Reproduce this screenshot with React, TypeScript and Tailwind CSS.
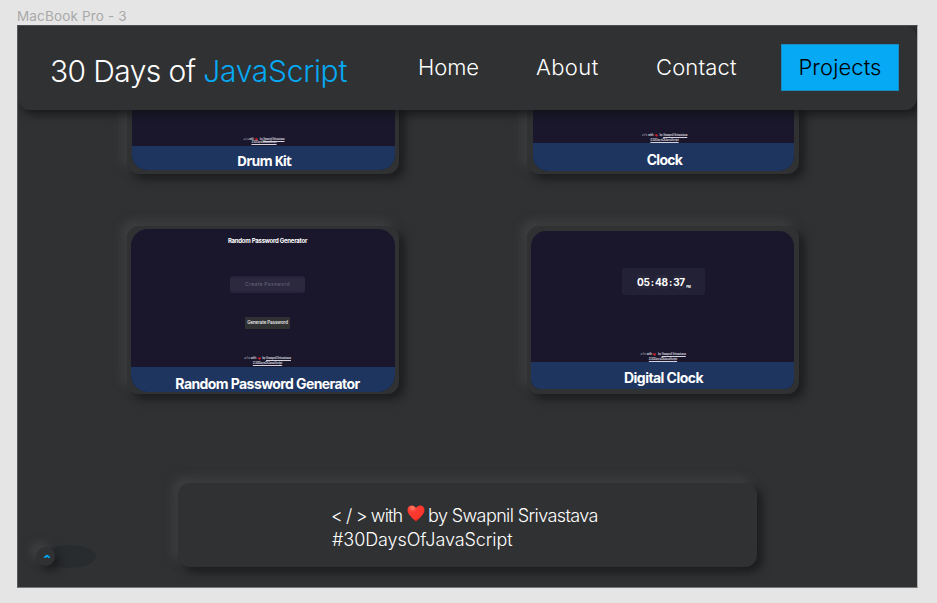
import type { ReactNode } from "react";

const raised =
  "shadow-[5px_5px_10px_rgba(18,19,20,0.7),-5px_-5px_10px_rgba(78,80,82,0.5)]";

function Heart({ className, flat = false }: { className: string; flat?: boolean }) {
  return (
    <svg viewBox="0 0 18 17" className={className}>
      <defs>
        <radialGradient id="heart" cx="0.3" cy="0.15" r="0.9">
          <stop offset="0" stopColor="#ff8069" />
          <stop offset="0.3" stopColor="#ff3a30" />
          <stop offset="0.75" stopColor="#fb352b" />
          <stop offset="1" stopColor="#d91b18" />
        </radialGradient>
      </defs>
      <path
        d="M9 3.1C8 1.3 6.600.4 4.800.4 2.300.4.5 2.300.5 5c0 4.200 4.200 7.600 8.500 11.500C13.300 12.600 17.500 9.200 17.500 5c0-2.700-1.800-4.600-4.300-4.600C11.400.4 10 1.300 9 3.100Z"
        fill={flat ? "#d3202c" : "url(#heart)"}
      />
    </svg>
  );
}

function Credit({ className }: { className: string }) {
  return (
    <div
      className={`flex flex-col items-center font-semibold tracking-[-0.24px] text-[#d4d3dd] ${className}`}
    >
      <div className="flex items-center whitespace-nowrap">
        <span>&lt; / &gt; with</span>
        <Heart flat className="mx-[1.5px] size-[3px]" />
        <span>
          by <span className="underline">Swapnil Srivastava</span>
        </span>
      </div>
      <div className="whitespace-nowrap underline">#30DaysOfJavaScript</div>
    </div>
  );
}

function Card({
  pad,
  band,
  round,
  title,
  children,
}: {
  pad: string;
  band: string;
  round: string;
  title: ReactNode;
  children: ReactNode;
}) {
  return (
    <article className={`h-[168px] w-[272px] rounded-[12px] bg-[#303133] ${raised} ${pad}`}>
      <div className={`flex h-full flex-col overflow-hidden bg-[#1a172c] ${round}`}>
        <div className="flex min-h-0 flex-1 flex-col items-center">{children}</div>
        <div
          className={`flex shrink-0 justify-center whitespace-nowrap bg-[#1e355f] text-[14px] font-bold text-white ${band}`}
        >
          {title}
        </div>
      </div>
    </article>
  );
}

function Header() {
  return (
    <header className="relative z-10 flex h-[84px] w-[899px] rounded-[12px] bg-[#303133] font-light text-white shadow-[4px_4px_10px_rgba(15,16,17,0.75)]">
      <h1 className="ml-[32px] mt-[26px] w-[368px] whitespace-nowrap text-[30px] leading-[38px]">
        <span className="tracking-[-0.6px]">30 Days of </span>
        <span className="tracking-[-0.3px] text-[#05a9f4]">JavaScript</span>
      </h1>
      <nav className="mt-[18px] flex h-[47px] whitespace-nowrap text-[22px] leading-[46px]">
        <a className="w-[118px] tracking-[-0.1px]">Home</a>
        <a className="w-[120px] tracking-[0.4px]">About</a>
        <a className="w-[125px] tracking-[0.15px]">Contact</a>
        <a className="w-[118px] border border-[#168cc2] bg-[#05a9f4] text-center leading-[44px] tracking-[0.1px] text-black">
          Projects
        </a>
      </nav>
    </header>
  );
}

export default function App() {
  return (
    <div className="h-[603px] w-[937px] overflow-hidden bg-[#e5e5e5] pl-[17px] font-['Inter','Liberation_Sans',sans-serif]">
      <div className="h-[25px] whitespace-nowrap pt-[7px] text-[13.500px] leading-[18px] tracking-[0.15px] text-[#a9a9a9]">
        MacBook Pro - 3
      </div>
      <div className="h-[563px] w-[901px] overflow-hidden border border-b-[#77787a] border-l-[#58595b] border-r-[#b3b3b3] border-t-[#4b4c4e] bg-[#303133]">
        <Header />
        <main className="-mt-[104px] ml-[109px] grid w-[672px] grid-cols-[272px_272px] gap-x-[128px] gap-y-[52px]">
          <Card
            pad="pb-[4px] pl-[5px] pr-[4px] pt-[6px]"
            round="rounded-[15px]"
            band="h-[24px] pl-[1px] leading-[31px]"
            title={
              <span className="font-['Open_Sans'] text-[13.500px] tracking-[-0.85px]">Drum Kit</span>
            }
          >
            <Credit className="mt-[126px] pl-[1px] text-[2.800px] leading-[3.200px]" />
          </Card>
          <Card
            pad="pb-[3px] pl-[6px] pr-[5px] pt-[6px]"
            round="rounded-[15px]"
            band="h-[28px] pl-[2px] leading-[34px]"
            title={<span className="tracking-[-0.7px]">Clock</span>}
          >
            <Credit className="mt-[121px] pl-[2px] text-[3.100px] leading-[5px]" />
          </Card>
          <Card
            pad="pb-[2px] pl-[4px] pr-[4px] pt-[3px]"
            round="rounded-[17px]"
            band="h-[25px] pl-[9px] leading-[34px]"
            title={<span className="tracking-[-0.58px]">Random Password Generator</span>}
          >
            <div className="ml-[9px] flex w-[90px] flex-1 flex-col items-center whitespace-nowrap text-white">
              <div className="mt-[7px] text-[6px] font-bold leading-[9px] tracking-[-0.24px]">
                Random Password Generator
              </div>
              <div className="mt-[31px] h-[17px] w-[75px] rounded-[3px] border-y-2 border-[#26233a] bg-[#2c293f] text-center text-[5px] leading-[13px] tracking-[0.3px] text-[#67657a]">
                Create Password
              </div>
              <div className="mt-[24px] h-[12px] w-[45px] rounded-[1px] bg-[#303133] text-center text-[4.500px] font-semibold leading-[12px] tracking-[-0.1px] text-[#e2e2e2]">
                Generate Password
              </div>
              <Credit className="mt-[27px] text-[3.200px] leading-[5px]" />
            </div>
          </Card>
          <Card
            pad="pb-[5px] pl-[4px] pr-[5px] pt-[5px]"
            round="rounded-t-[15px] rounded-b-[9px]"
            band="h-[27px] pl-[2px] leading-[32px]"
            title={<span className="tracking-[-0.55px]">Digital Clock</span>}
          >
            <div className="ml-[2px] mt-[37px] flex h-[27px] w-[83px] items-center justify-center rounded-[3px] bg-[#232136] text-[10px] font-bold leading-[14px] tracking-[-0.3px] text-white">
              <span className="rounded-[2px] bg-[#29273b] px-[0.500px]">05</span>
              <span className="px-[0.700px]">:</span>
              <span className="rounded-[2px] bg-[#29273b] px-[0.500px]">48</span>
              <span className="px-[0.700px]">:</span>
              <span className="rounded-[2px] bg-[#29273b] px-[0.500px]">37</span>
              <span className="ml-px mt-[11px] text-[3px] leading-[4px]">PM</span>
            </div>
            <Credit className="mt-[57px] pl-[1px] text-[3.100px] leading-[5px]" />
          </Card>
        </main>
        <div className="mt-[89px] flex">
          <div className="ml-[18px] mt-[62px] flex h-[23px] w-[60px] items-center">
            <div className="z-10 flex size-[19px] shrink-0 items-center justify-center rounded-full bg-[#303133] shadow-[5px_5px_9px_rgba(18,19,20,0.65),-5px_-5px_9px_rgba(78,80,82,0.5)]">
              <svg viewBox="0 0 8 5" className="ml-[2px] h-[5px] w-[8px]">
                <path d="M0.500 4C1.500 2 2.700 0.700 4 0.700S6.500 2 7.500 4H5.500L4 2.900 2.500 4Z" fill="#05a0e6" />
              </svg>
            </div>
            <div className="-ml-[13px] h-[23px] w-[54px] shrink-0 rounded-[50%] bg-[#292c2f]" />
          </div>
          <footer
            className={`ml-[82px] h-[84px] w-[579px] rounded-[12px] bg-[#303133] pl-[154px] pt-[21px] text-[18px] font-light leading-[24px] text-white ${raised}`}
          >
            <div className="flex whitespace-nowrap">
              <span className="-ml-px w-[76px] tracking-[-0.85px]">&lt; / &gt; with</span>
              <Heart className="mt-px h-[17px] w-[18px]" />
              <span className="ml-[3px] tracking-[-0.6px]">by Swapnil Srivastava</span>
            </div>
            <div className="tracking-[-0.08px]">#30DaysOfJavaScript</div>
          </footer>
        </div>
      </div>
    </div>
  );
}
